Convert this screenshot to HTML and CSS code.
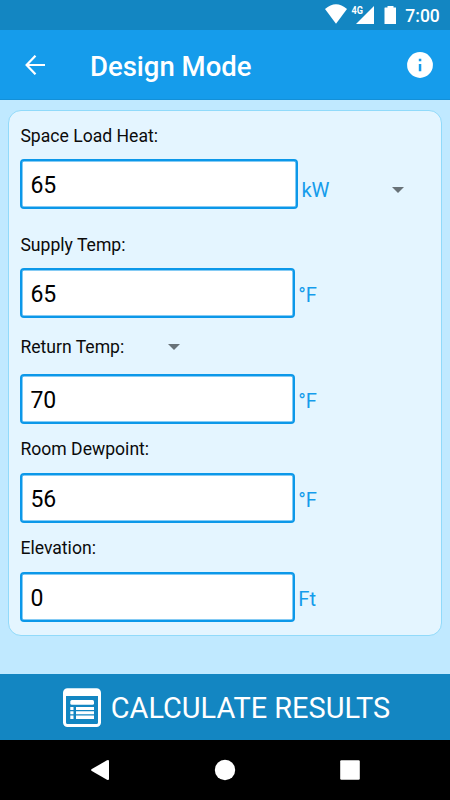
FILE: index.html
```html
<!DOCTYPE html>
<html lang="en">
<head>
<meta charset="utf-8">
<title>Design Mode</title>
<link rel="stylesheet" href="styles.css">
</head>
<body>
<div class="status">
  <svg width="150" height="30" viewBox="0 0 150 30" fill="#fff">
    <path d="M25 9Q36-.5 47 9L36 23.800Z"/>
    <path d="M74 6V24H56Z"/>
    <path d="M85 7.500h2.500v-1.500h6v1.500h2.500v16.500H84.500V8q0-.5.500-.5Z"/>
    <text class="network" x="51.500" y="13.800" textLength="11.500" lengthAdjust="spacingAndGlyphs">4G</text>
    <text class="clock" x="105.300" y="22" textLength="34.500" lengthAdjust="spacingAndGlyphs">7:00</text>
  </svg>
</div>
<header class="appbar">
  <svg class="back" width="20" height="20" viewBox="0 0 20 20" fill="none" stroke="#fff" stroke-width="2.200"><path d="M20 10H2M10.500.700L1.600 10l8.900 9.300"/></svg>
  <h1 class="title">Design Mode</h1>
  <svg width="26" height="26" viewBox="0 0 26 26"><circle cx="13" cy="13" r="12.900" fill="#fff"/><path d="M11.800 6.800h2.500v2.500h-2.500zM11.800 12h2.500v7.200h-2.500z" fill="#159ceb"/></svg>
</header>
<main class="content">
  <form class="card">
    <label class="label first" for="load">Space Load Heat:</label>
    <div class="row"><input class="field wide" id="load" value="65"><span class="unit kw">kW</span><i class="arrow unit-arrow"></i></div>
    <label class="label supply" for="supply">Supply Temp:</label>
    <div class="row"><input class="field" id="supply" value="65"><span class="unit">°F</span></div>
    <label class="label return" for="return">Return Temp:<i class="arrow"></i></label>
    <div class="row"><input class="field" id="return" value="70"><span class="unit">°F</span></div>
    <label class="label" for="dewpoint">Room Dewpoint:</label>
    <div class="row"><input class="field" id="dewpoint" value="56"><span class="unit">°F</span></div>
    <label class="label" for="elevation">Elevation:</label>
    <div class="row"><input class="field" id="elevation" value="0"><span class="unit">Ft</span></div>
  </form>
</main>
<button class="calculate">
  <svg width="38" height="39" viewBox="0 0 38 39"><rect x="1.500" y="1.800" width="35" height="35.700" rx="3" fill="none" stroke="#fff" stroke-width="3"/><path d="M2 2h34v6H2z" fill="#fff"/><g fill="#fff"><rect x="7.300" y="12" width="23.700" height="4.800" rx="1.500"/><path d="M7.300 19h3.200v3H7.300zM13 19h18v3H13zM7.300 23.300h3.200v3H7.300zM13 23.300h18v3H13zM7.300 27.600h3.200v3.400H7.300zM13 27.600h18v3.400H13z"/></g></svg>
  <span>CALCULATE RESULTS</span>
</button>
<nav class="nav">
  <svg width="450" height="60" viewBox="0 0 450 60" fill="#fff"><path d="M91.800 29L107 20.300q2-1 2 1v17.400q0 2-2 1L91.800 31q-1.500-1 0-2Z"/><circle cx="225" cy="30" r="10.200"/><rect x="340.200" y="20.300" width="19.600" height="19.400" rx="1.200"/></svg>
</nav>
</body>
</html>
```
FILE: styles.css
```css
* { box-sizing: border-box; }
body {
  margin: 0;
  width: 450px;
  height: 800px;
  display: flex;
  flex-direction: column;
  overflow: hidden;
  font-family: Roboto, "Liberation Sans", sans-serif;
  background: #c0e9ff;
}
.status {
  height: 30px;
  background: #1386c2;
  display: flex;
  justify-content: flex-end;
}
.network { font-size: 10px; font-weight: 700; }
.clock { font-size: 17.5px; font-weight: 500; }
.appbar {
  height: 70px;
  padding: 0 17px 0 25px;
  display: flex;
  align-items: center;
  background: #159ceb;
  border-bottom: 1px solid #1390d8;
  color: #fff;
}
.title {
  flex: 1;
  margin: 4px 0 0 45px;
  font-size: 27.5px;
  line-height: 34px;
  font-weight: 500;
}
.content { flex: 1; padding: 10.4px 8px 0; }
.card {
  height: 525.2px;
  padding: 0 11.4px;
  border: 1px solid #91dafa;
  border-radius: 13px;
  background: #e4f5ff;
}
.label {
  display: flex;
  align-items: center;
  height: 49px;
  padding-top: 1px;
  font-size: 17.6px;
  color: #0b0b0b;
}
.first { height: 47.6px; padding-top: 2px; }
.supply { height: 59px; padding: 0 0 13px; align-items: flex-end; }
.return { height: 55.7px; padding-top: 2px; }
.row { display: flex; align-items: center; height: 50px; }
.field {
  width: 274.4px;
  height: 50px;
  padding: 4px 8px 0;
  border: 2px solid #0c98e9;
  border-radius: 4px;
  box-shadow: inset 0 0 0 .5px #0c98e9;
  background: #fff;
  color: #000;
  font: 23px Roboto, "Liberation Sans", sans-serif;
  outline: 0;
}
.wide { width: 277.5px; }
.unit { margin-left: 3.500px; padding-top: 4px; font-size: 20.2px; color: #159ceb; }
.kw { padding-top: 12px; }
.arrow {
  width: 0;
  border: 6.3px solid transparent;
  border-top-color: #687278;
  border-bottom: 0;
  margin-left: 43.5px;
}
.unit-arrow { margin: 12px 0 0 62px; }
.calculate {
  height: 66px;
  border: 0;
  padding: 0 0 0 3px;
  background: #1386c2;
  color: #fff;
  display: flex;
  align-items: center;
  justify-content: center;
  gap: 10px;
  font: 28.9px Roboto, "Liberation Sans", sans-serif;
}
.calculate span { padding-top: 2px; }
.nav { height: 60px; background: #000; }
```
